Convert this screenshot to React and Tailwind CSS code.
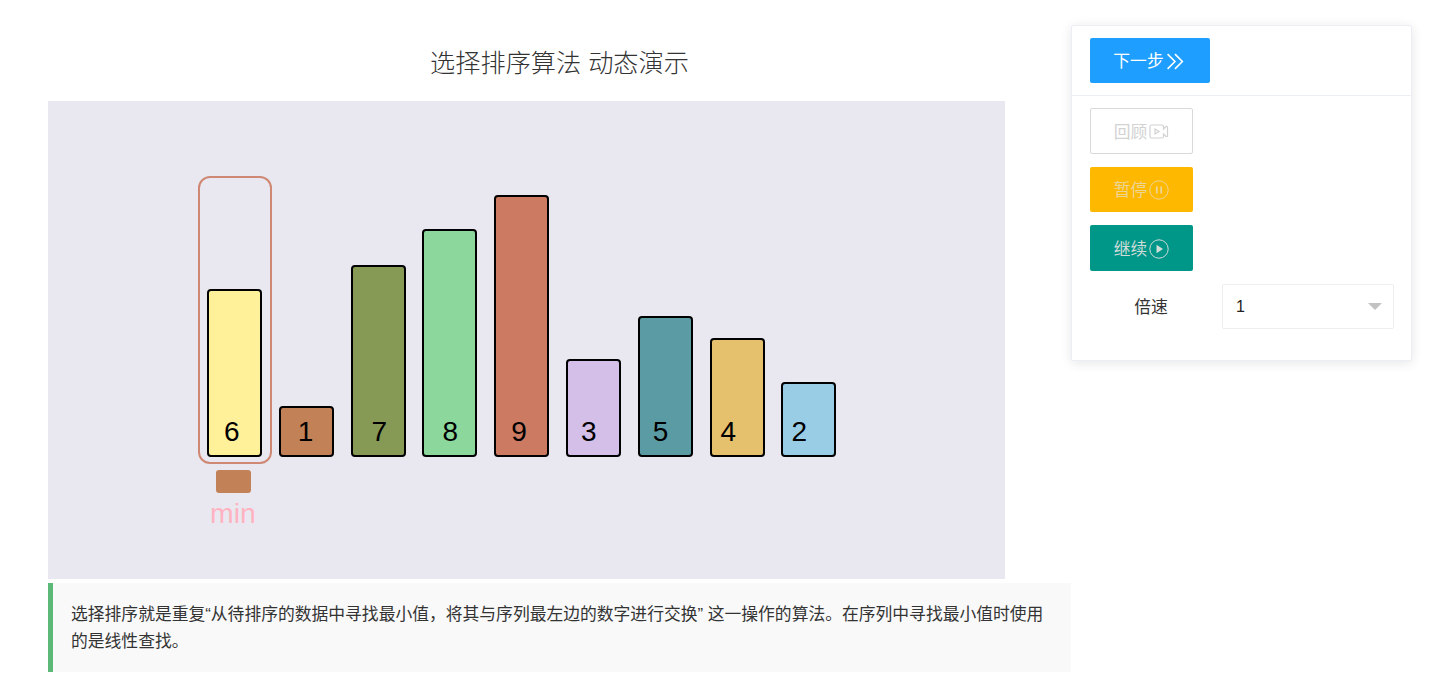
const sans = "font-['Liberation_Sans','Noto_Sans_CJK_SC',sans-serif]";

const bars = [
  { n: 6, cls: "h-[168px] bg-[#fff09a] pl-[15px]" },
  { n: 1, cls: "h-[51px] bg-[#c38157] pl-[17px]" },
  { n: 7, cls: "h-[192px] bg-[#869a55] pl-[19px]" },
  { n: 8, cls: "h-[228px] bg-[#8cd89c] pl-[18px]" },
  { n: 9, cls: "h-[262px] bg-[#cc7b62] pl-[15px]" },
  { n: 3, cls: "h-[98px] bg-[#d3bfe8] pl-[13px]" },
  { n: 5, cls: "h-[141px] bg-[#5b9ca4] pl-[13px]" },
  { n: 4, cls: "h-[119px] bg-[#e5c16d] pl-[9px]" },
  { n: 2, cls: "h-[75px] bg-[#99cde6] pl-[8px]" },
];

function Chevrons() {
  return (
    <svg viewBox="0 0 18 16" className="w-[19px] h-[17px] ml-[2px] mt-[1px]" fill="none" stroke="currentColor" strokeWidth="1.5">
      <path d="M1.5 1 L8.5 8 L1.5 15" />
      <path d="M8.5 1 L15.5 8 L8.5 15" />
    </svg>
  );
}

function VideoIcon() {
  return (
    <svg viewBox="0 0 20 15" className="w-[20px] h-[15px] ml-[2px]" fill="none" stroke="currentColor" strokeWidth="1.2">
      <path d="M14.5 5 V2.5 Q14.5 1 13 1 H2.5 Q1 1 1 2.5 V12.5 Q1 14 2.5 14 H13 Q14.5 14 14.5 12.5 V10 L17 12.5 Q18.5 13 18.5 11.5 V3.5 Q18.5 2 17 2.5 Z" />
      <path d="M6 5 L10 7.5 L6 10 Z" />
    </svg>
  );
}

function PauseIcon() {
  return (
    <svg viewBox="0 0 20 20" className="w-[20px] h-[20px] ml-[2px] mt-[1px]" fill="none" stroke="currentColor">
      <circle cx="10" cy="10" r="9.2" strokeWidth="1" />
      <path d="M7.8 6.5 V13.5 M12.2 6.5 V13.5" strokeWidth="1.8" />
    </svg>
  );
}

function PlayIcon() {
  return (
    <svg viewBox="0 0 20 20" className="w-[20px] h-[20px] ml-[2px] mt-[1px]" fill="none" stroke="currentColor">
      <circle cx="10" cy="10" r="9.2" strokeWidth="1" />
      <path d="M7.5 5.8 L14 10 L7.5 14.2 Z" fill="currentColor" stroke="none" />
    </svg>
  );
}

function Btn({ cls, children }) {
  return (
    <button className={`flex items-center justify-center h-[45px] rounded-[2px] text-[16.8px] ${cls}`}>
      {children}
    </button>
  );
}

export default function App() {
  return (
    <div className={`flex w-[1440px] h-[681px] overflow-hidden bg-white text-[#303133] ${sans}`}>
      <div className="w-[1071px] pl-[48px] shrink-0">
        <h1 className="h-[101px] pt-[45px] text-center text-[25.2px] leading-[36px] text-[#333333] font-light">
          选择排序算法 动态演示
        </h1>
        <div className="relative w-[957px] h-[478px] bg-[#e9e8f0]">
          <div className="flex items-end gap-[16.8px] h-[356px] pl-[159px]">
            {bars.map((b) => (
              <div
                key={b.n}
                className={`flex items-end w-[55px] shrink-0 border-2 border-black rounded-[4px] box-border pb-[7px] text-[28px] leading-[32px] text-black ${b.cls}`}
              >
                {b.n}
              </div>
            ))}
          </div>
          <div className="absolute left-[150px] top-[75px] w-[74px] h-[288px] border-2 border-[#cf8873] rounded-[12px]" />
          <div className="absolute left-[168px] top-[369px] w-[35px] h-[23px] rounded-[3px] bg-[#c38157]" />
          <div className="absolute left-[162px] top-[396px] text-[28.4px] leading-[32px] text-[#ffb3c1]">min</div>
        </div>
        <div className="mt-[4px] w-[1023px] h-[89px] border-l-[5.5px] border-[#5cb978] bg-[#f9f9f9] pl-[18px] pr-[24px] pt-[18px] text-[16.8px] leading-[27px] text-[#333333]">
          选择排序就是重复“从待排序的数据中寻找最小值，将其与序列最左边的数字进行交换” 这一操作的算法。在序列中寻找最小值时使用的是线性查找。
        </div>
      </div>
      <div className="flex-1 pt-[25px]">
        <div className="w-[341px] h-[336px] border border-[#ebeef5] rounded-[2px] bg-white shadow-[0_2px_12px_0_rgba(0,0,0,0.1)]">
          <div className="h-[70px] border-b border-[#ebeef5] pt-[12px] pl-[18px]">
            <Btn cls="w-[120px] pr-[2px] bg-[#1e9fff] text-white">
              <span className="pt-[2px]">下一步</span>
              <Chevrons />
            </Btn>
          </div>
          <div className="flex flex-col items-start gap-[13px] pl-[18px] pt-[12px]">
            <Btn cls="w-[103px] h-[46px] border border-[#d9d9d9] bg-white text-[#d2d2d2]">
              <span className="pt-[3px]">回顾</span>
              <VideoIcon />
            </Btn>
            <Btn cls="w-[103px] bg-[#ffb800] text-[#ecd596]">
              <span className="pt-[3px]">暂停</span>
              <PauseIcon />
            </Btn>
            <Btn cls="w-[103px] h-[46px] bg-[#009688] text-[#cfdcd8]">
              <span className="pt-[4px]">继续</span>
              <PlayIcon />
            </Btn>
          </div>
          <div className="flex items-center mt-[13px] pl-[18px]">
            <div className="w-[122px] pt-[3px] text-center text-[16.8px] text-[#333333]">倍速</div>
            <div className="flex items-center justify-between ml-[10px] w-[172px] h-[45px] border border-[#eeeeee] rounded-[2px] pl-[13px] pr-[11px] text-[16px] text-[#222222]">
              <span className="pt-[1px]">1</span>
              <div className="w-0 h-0 border-x-[7px] border-x-transparent border-t-[7px] border-t-[#c2c2c2]" />
            </div>
          </div>
        </div>
      </div>
    </div>
  );
}
